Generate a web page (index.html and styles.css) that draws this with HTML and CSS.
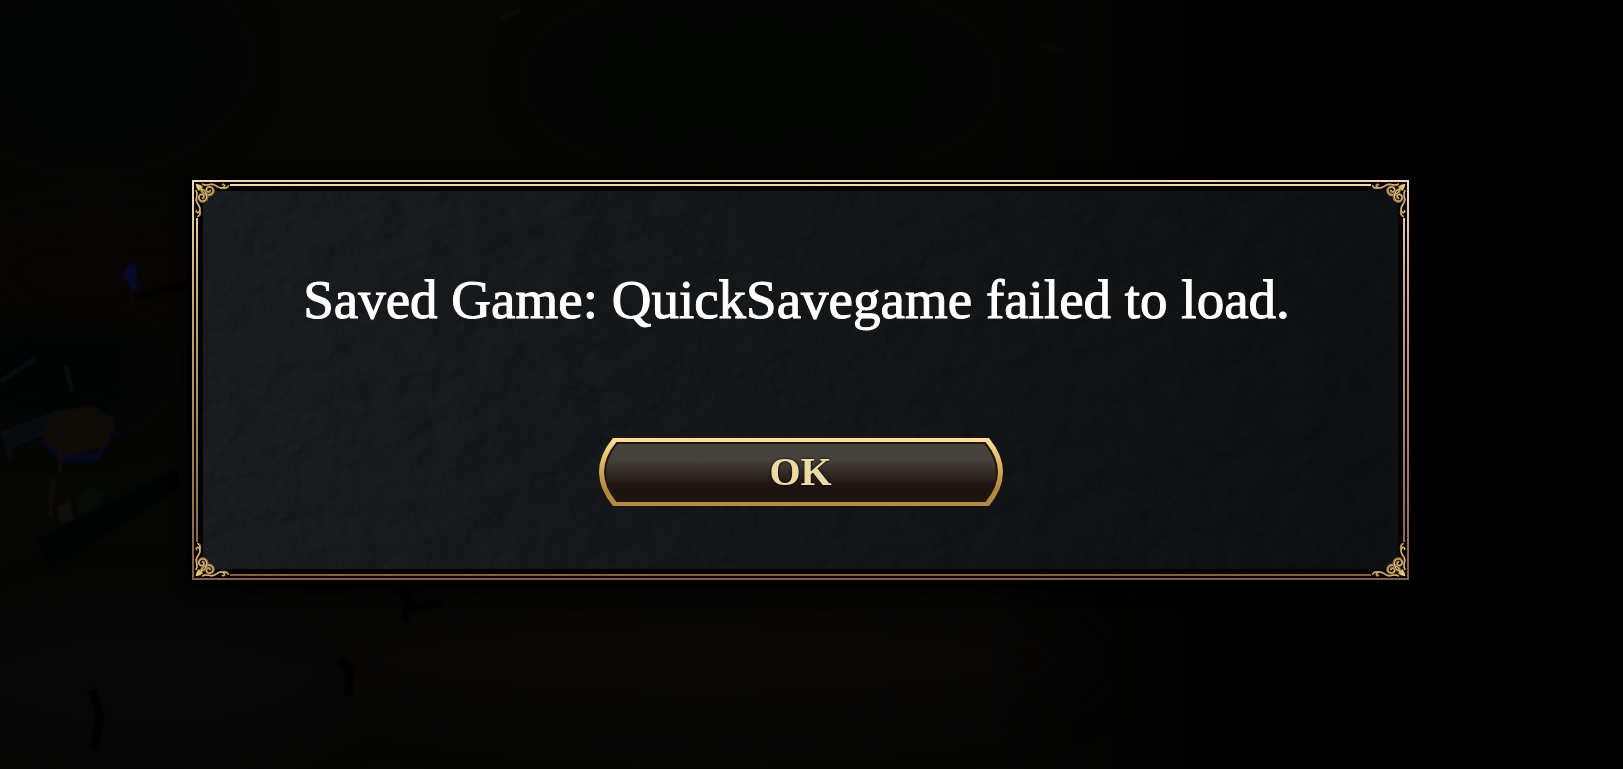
FILE: index.html
```
<!DOCTYPE html>
<html lang="en">

<head>
    <meta charset="UTF-8">
    <meta name="viewport" content="width=device-width, initial-scale=1.0">
    <title>Load Game</title>
    <link rel="stylesheet" href="styles.css">
</head>

<body>
    <!-- Darkened game world behind the dialog -->
    <svg class="scene" viewBox="0 0 1623 769" preserveAspectRatio="xMidYMid slice" aria-hidden="true">
        <defs>
            <filter id="soft" x="-50%" y="-50%" width="200%" height="200%" color-interpolation-filters="sRGB">
                <feGaussianBlur stdDeviation="24" />
            </filter>
            <filter id="blur" x="-50%" y="-50%" width="200%" height="200%" color-interpolation-filters="sRGB">
                <feGaussianBlur stdDeviation="1" />
            </filter>
            <linearGradient id="fade">
                <stop offset="0.6" stop-color="#000" stop-opacity="0" />
                <stop offset="0.8" stop-color="#000" />
            </linearGradient>
        </defs>
        <rect width="1623" height="769" fill="#060605" />
        <g filter="url(#soft)">
            <ellipse cx="90" cy="60" rx="140" ry="90" fill="#030504" />
            <ellipse cx="760" cy="80" rx="220" ry="80" fill="#040604" />
            <ellipse cx="100" cy="270" rx="140" ry="50" fill="#080604" />
            <ellipse cx="60" cy="370" rx="100" ry="50" fill="#020404" />
            <ellipse cx="700" cy="660" rx="400" ry="70" fill="#080706" />
            <ellipse cx="150" cy="680" rx="200" ry="80" fill="#070707" />
        </g>
        <g filter="url(#blur)">
            <path d="M0 382 L36 358 M66 366 L72 392" stroke="#0b0d10" stroke-width="4" fill="none" />
            <path d="M0 434 L50 415 L46 432 L10 447 L10 462" stroke="#0a0c10" stroke-width="3" fill="#07090c" />
            <path d="M40 441 L60 462 L98 462 L117 430 L113 420 L98 452 L65 452 L44 436 Z" fill="#07071a" />
            <path d="M54 412 L92 407 L113 419 L106 447 L66 454 L43 439 Z" fill="#0e0b07" stroke="#100a08" stroke-width="2" />
            <path d="M60 453 L60 473 M53 478 L50 518" stroke="#110c07" stroke-width="4" />
            <path d="M56 508 L70 499 L74 520 L60 523 Z" fill="#0f0d08" />
            <path d="M76 497 L90 486 L108 492 L100 506 L78 514 Z" fill="#070c03" />
            <path d="M36 540 L176 468 L184 486 L48 572 Z" fill="#020303" stroke="#07090a" stroke-width="1" />
            <path d="M138 298 Q166 290 190 283" stroke="#020202" stroke-width="6" fill="none" />
            <path d="M122 276 L129 264 L137 265 L136 283 L139 291 L131 289 L127 281 Z" fill="#07082a" />
            <path d="M132 291 L133 310 M124 280 L121 287 M141 270 L149 281" stroke="#0c0806" stroke-width="2" />
            <path d="M400 590 L408 600 L405 622 M410 610 L440 602" stroke="#020202" stroke-width="7" fill="none" />
            <path d="M340 660 L350 672 L348 696 M92 690 L100 714 L94 750" stroke="#010101" stroke-width="8" fill="none" />
            <path d="M500 20 L520 10 M1040 45 L1062 50" stroke="#0a0a0a" stroke-width="6" />
        </g>
        <rect width="1623" height="769" fill="url(#fade)" />
    </svg>

    <!-- Corner ornament, shared by all four corners -->
    <svg class="symbols" aria-hidden="true">
        <defs>
            <linearGradient id="gold" x1="0" y1="0" x2="1" y2="1">
                <stop offset="0" stop-color="#f4dc94" />
                <stop offset="1" stop-color="#c99f4c" />
            </linearGradient>
            <g id="scroll" fill="none" stroke-linecap="round">
                <g stroke="#96743e">
                    <path d="M27 29 C32 47 58 52 64 36 C68 21 47 14 43 28 C42 37 53 39 55 32" stroke-width="7" />
                    <path d="M32 13 C44 20 52 11 64 14 C76 18 80 27 93 24 C101 20 99 11 92 14" stroke-width="6" />
                    <path d="M93 24 C101 26 106 24 109 18" stroke-width="6" />
                </g>
                <g stroke="#e3c88c">
                    <path d="M27 28 C32 45 57 50 63 35 C66 21 47 15 43 27 C42 36 52 38 54 31" stroke-width="3" />
                    <path d="M32 12 C44 19 52 10 64 13 C76 17 80 26 93 23 C100 19 98 11 92 13" stroke-width="3" />
                    <path d="M93 23 C101 25 106 23 109 17" stroke-width="3" />
                </g>
            </g>
            <symbol id="corner" viewBox="0 0 114 114">
                <path d="M9 9 H114 V27 H60 Q27 27 27 60 V114 H9 Z" fill="#050302" />
                <use href="#scroll" />
                <use href="#scroll" transform="matrix(0 1 1 0 0 0)" />
                <path d="M11 11 L24 14 L33 20 L28 26 L34 34 L26 28 L20 33 L14 24 Z" fill="url(#gold)" />
            </symbol>
        </defs>
    </svg>

    <main class="screen">
        <section class="dialog" role="alertdialog" aria-labelledby="message">
            <svg class="texture" aria-hidden="true">
                <filter id="grain" x="0" y="0" width="100%" height="100%" color-interpolation-filters="sRGB">
                    <feTurbulence type="fractalNoise" baseFrequency="0.02 0.03" numOctaves="5" seed="4" />
                    <feDiffuseLighting lighting-color="#ffffff" surfaceScale="6">
                        <feDistantLight azimuth="200" elevation="55" />
                    </feDiffuseLighting>
                </filter>
                <rect width="100%" height="100%" filter="url(#grain)" />
            </svg>
            <div class="inner-line"></div>
            <svg class="corner top-left" aria-hidden="true"><use href="#corner" /></svg>
            <svg class="corner top-right" aria-hidden="true"><use href="#corner" /></svg>
            <svg class="corner bottom-left" aria-hidden="true"><use href="#corner" /></svg>
            <svg class="corner bottom-right" aria-hidden="true"><use href="#corner" /></svg>

            <p class="message" id="message">Saved Game: QuickSavegame failed to load.</p>
            <button class="ok-button" type="button">
                <svg class="button-frame" viewBox="0 0 404 68" preserveAspectRatio="none" aria-hidden="true">
                    <defs>
                        <linearGradient id="rim" x1="0" y1="0" x2="0" y2="1">
                            <stop offset="0" stop-color="#ffe09a" />
                            <stop offset="0.3" stop-color="#e5bd6c" />
                            <stop offset="0.75" stop-color="#b5863f" />
                            <stop offset="1" stop-color="#b58a47" />
                        </linearGradient>
                        <linearGradient id="face" x1="0" y1="0" x2="0" y2="1">
                            <stop offset="0" stop-color="#47443f" />
                            <stop offset="0.3" stop-color="#45413c" />
                            <stop offset="0.72" stop-color="#1e1512" />
                            <stop offset="1" stop-color="#1d1410" />
                        </linearGradient>
                    </defs>
                    <path d="M14 0 H390 Q418 34 390 68 H14 Q-14 34 14 0 Z" fill="url(#rim)" />
                    <path d="M18 5 H386 Q410 34 386 63 H18 Q-6 34 18 5 Z" fill="url(#face)" stroke="#21180d" stroke-width="2" />
                </svg>
                <span class="ok-label">OK</span>
            </button>
        </section>
    </main>
</body>

</html>
```
FILE: styles.css
```
* {
    box-sizing: border-box;
}

body {
    margin: 0;
    background-color: #000;
    color: #fff;
    font-family: "Liberation Serif", "Times New Roman", serif;
}

.scene {
    position: fixed;
    inset: 0;
    width: 100%;
    height: 100%;
}

.symbols {
    position: absolute;
    width: 0;
    height: 0;
}

.screen {
    display: flex;
    align-items: center;
    justify-content: center;
    min-height: 100vh;
    padding: 0 22px 10px 0;
}

.dialog {
    position: relative;
    display: flex;
    flex-direction: column;
    align-items: center;
    width: 75vw;
    padding: 86px 24px 72px;
    border: 2px solid #cfae80;
    border-image: linear-gradient(#f0d8b0, #c8a47a 30%, #80603e) 2;
    background: linear-gradient(100deg, #1b1d20, #16181a 45%, #0e1012);
    box-shadow: 0 4px 14px 4px #000;
}

.texture {
    position: absolute;
    inset: 0;
    width: 100%;
    height: 100%;
    opacity: 0.5;
    mix-blend-mode: multiply;
}

.inner-line {
    position: absolute;
    inset: 2px;
    border: 2px solid #cfae80;
    border-image: linear-gradient(#f0d8b0, #c8a47a 30%, #80603e) 2;
    outline: 2px solid #050302;
    box-shadow: inset 0 0 0 5px #050403;
}

.corner {
    position: absolute;
    width: 38px;
    height: 38px;
}

.top-left {
    top: -2px;
    left: -2px;
}

.top-right {
    top: -2px;
    right: -2px;
    transform: scaleX(-1);
}

.bottom-left {
    bottom: -2px;
    left: -2px;
    transform: scaleY(-1);
}

.bottom-right {
    right: -2px;
    bottom: -2px;
    transform: scale(-1);
}

.message {
    position: relative;
    margin: 0;
    padding-right: 8px;
    font-size: 55px;
    line-height: 64px;
    text-align: center;
    -webkit-text-stroke: 1px #fff;
}

.ok-button {
    position: relative;
    width: 404px;
    max-width: 100%;
    height: 68px;
    margin-top: 106px;
    padding: 0;
    border: 0;
    background: none;
    color: #ecdca4;
    font-family: inherit;
    font-size: 40px;
    font-weight: bold;
    line-height: 68px;
    cursor: pointer;
}

.button-frame {
    position: absolute;
    inset: 0;
    width: 100%;
    height: 100%;
}

.ok-label {
    position: relative;
    text-shadow: 0 0 3px #000;
}
```
